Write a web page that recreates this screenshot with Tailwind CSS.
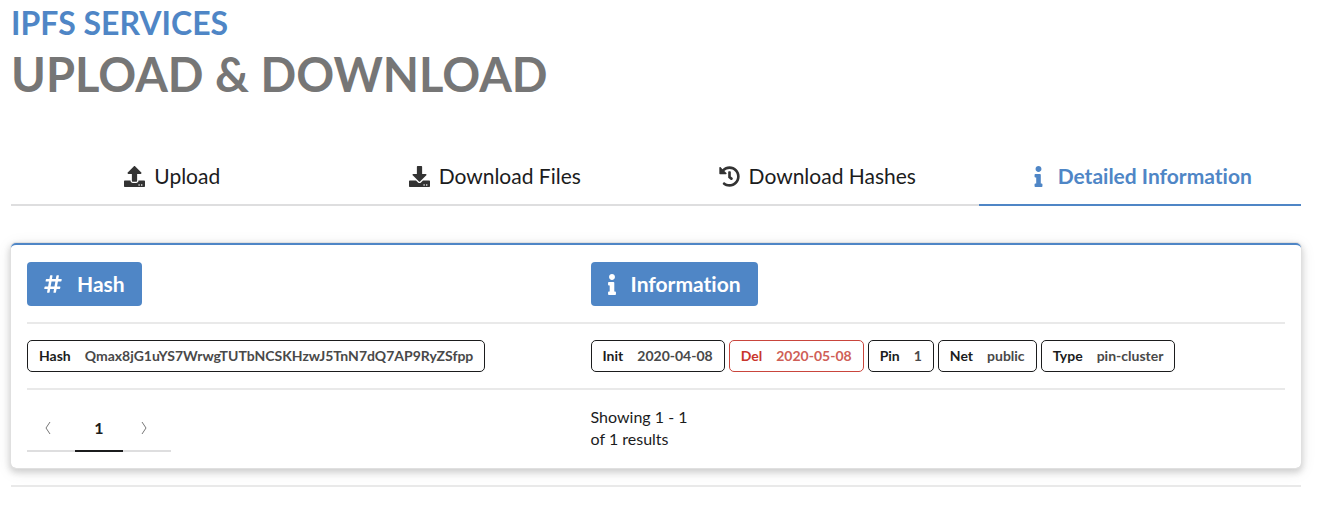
<!DOCTYPE html>
<html lang="en">
<head>
<meta charset="utf-8">
<meta name="viewport" content="width=device-width, initial-scale=1">
<title>IPFS Services</title>
<script src="https://cdn.jsdelivr.net/npm/@tailwindcss/browser@4"></script>
</head>
<body class="bg-white font-[Lato,sans-serif] text-[#1b1c1d] [font-variant-ligatures:none]">
<svg class="hidden" aria-hidden="true">
  <symbol id="upload" viewBox="0 0 512 512"><path d="M296 384h-80c-13.3 0-24-10.7-24-24V192h-87.7c-17.8 0-26.7-21.5-14.1-34.1L242.3 5.7c7.5-7.5 19.8-7.5 27.3 0l152.2 152.2c12.6 12.6 3.7 34.1-14.1 34.1H320v168c0 13.3-10.7 24-24 24zm216-8v112c0 13.3-10.7 24-24 24H24c-13.3 0-24-10.7-24-24V376c0-13.3 10.7-24 24-24h136v8c0 30.9 25.1 56 56 56h80c30.9 0 56-25.1 56-56v-8h136c13.3 0 24 10.7 24 24zm-124 88c0-11-9-20-20-20s-20 9-20 20 9 20 20 20 20-9 20-20zm64 0c0-11-9-20-20-20s-20 9-20 20 9 20 20 20 20-9 20-20z"/></symbol>
  <symbol id="download" viewBox="0 0 512 512"><path d="M216 0h80c13.3 0 24 10.7 24 24v168h87.7c17.8 0 26.7 21.5 14.1 34.1L269.7 378.3c-7.5 7.5-19.8 7.5-27.3 0L90.1 226.1c-12.6-12.6-3.7-34.1 14.1-34.1H192V24c0-13.3 10.7-24 24-24zm296 376v112c0 13.3-10.7 24-24 24H24c-13.3 0-24-10.7-24-24V376c0-13.3 10.7-24 24-24h146.7l49 49c20.1 20.1 52.5 20.1 72.6 0l49-49H488c13.3 0 24 10.7 24 24zm-124 88c0-11-9-20-20-20s-20 9-20 20 9 20 20 20 20-9 20-20zm64 0c0-11-9-20-20-20s-20 9-20 20 9 20 20 20 20-9 20-20z"/></symbol>
  <symbol id="history" viewBox="0 0 512 512"><path d="M504 255.531c.253 136.64-111.18 248.372-247.82 248.468-59.015.042-113.223-20.53-155.822-54.911-11.077-8.94-11.905-25.541-1.839-35.607l11.267-11.267c8.609-8.609 22.353-9.551 31.891-1.984C173.062 425.135 212.781 440 256 440c101.705 0 184-82.311 184-184 0-101.705-82.311-184-184-184-48.814 0-93.149 18.969-126.068 49.932l50.754 50.754c10.08 10.08 2.941 27.314-11.313 27.314H24c-8.837 0-16-7.163-16-16V38.627c0-14.254 17.234-21.393 27.314-11.314l49.372 49.372C129.209 34.136 189.552 8 256 8c136.81 0 247.747 110.78 248 247.531zm-180.912 78.784l9.823-12.63c8.138-10.463 6.253-25.542-4.21-33.679L288 256.349V152c0-13.255-10.745-24-24-24h-16c-13.255 0-24 10.745-24 24v135.651l65.409 50.874c10.463 8.137 25.541 6.253 33.679-4.21z"/></symbol>
  <symbol id="info" viewBox="0 0 192 512"><path d="M20 424.229h20V279.771H20c-11.046 0-20-8.954-20-20V212c0-11.046 8.954-20 20-20h112c11.046 0 20 8.954 20 20v212.229h20c11.046 0 20 8.954 20 20V492c0 11.046-8.954 20-20 20H20c-11.046 0-20-8.954-20-20v-47.771c0-11.046 8.954-20 20-20zM96 0C56.235 0 24 32.235 24 72s32.235 72 72 72 72-32.235 72-72S135.764 0 96 0z"/></symbol>
  <symbol id="hashtag" viewBox="0 0 448 512"><path d="M440.667 182.109l7.143-40c1.313-7.355-4.342-14.109-11.813-14.109h-74.81l14.623-81.891C377.123 38.754 371.468 32 363.997 32h-40.632a12 12 0 0 0-11.813 9.891L296.175 128H197.54l14.623-81.891C213.477 38.754 207.822 32 200.35 32h-40.632a12 12 0 0 0-11.813 9.891L132.528 128H53.432a12 12 0 0 0-11.813 9.891l-7.143 40C33.163 185.246 38.818 192 46.289 192h74.81L98.242 320H19.146a12 12 0 0 0-11.813 9.891l-7.143 40C-1.123 377.246 4.532 384 12.003 384h74.81L72.19 465.891C70.877 473.246 76.532 480 84.003 480h40.632a12 12 0 0 0 11.813-9.891L151.826 384h98.634l-14.623 81.891C234.523 473.246 240.178 480 247.65 480h40.632a12 12 0 0 0 11.813-9.891L315.472 384h79.096a12 12 0 0 0 11.813-9.891l7.143-40c1.313-7.355-4.342-14.109-11.813-14.109h-74.81l22.857-128h79.096a12 12 0 0 0 11.813-9.891zM261.889 320h-98.634l22.857-128h98.634l-22.857 128z"/></symbol>
</svg>

<main class="pl-[11px] pr-[27px]">
  <header class="pt-1 font-bold">
    <p class="text-[32px] leading-[38px] text-[#4f86c6]">IPFS SERVICES</p>
    <h1 class="text-[47px] leading-[64px] text-[#767676]">UPLOAD &amp; DOWNLOAD</h1>
  </header>

  <nav class="mt-[42px] grid grid-cols-4 text-[21px] leading-[26px]">
    <button type="button" class="flex items-center justify-center gap-[9px] border-b-2 border-[#dededf] py-[15px]">
      <svg class="size-[21px] fill-[#333]"><use href="#upload"/></svg>Upload
    </button>
    <button type="button" class="flex items-center justify-center gap-[9px] border-b-2 border-[#dededf] py-[15px]">
      <svg class="size-[21px] fill-[#333]"><use href="#download"/></svg>Download Files
    </button>
    <button type="button" class="flex items-center justify-center gap-[9px] border-b-2 border-[#dededf] py-[15px]">
      <svg class="size-[21px] fill-[#333]"><use href="#history"/></svg>Download Hashes
    </button>
    <button type="button" class="flex items-center justify-center gap-[9px] border-b-2 border-[#4f86c6] py-[15px] font-bold text-[#4f86c6]">
      <svg class="size-[21px] fill-current"><use href="#info"/></svg>Detailed Information
    </button>
  </nav>

  <section class="mt-[37px] rounded-[5px] border-t-2 border-[#4f86c6] px-4 shadow-[0_0_0_1px_#e0e0e0,0_3px_6px_1px_#cfcfcf,0_3px_16px_0_#e6e6e6]">
    <table class="w-full table-fixed text-left">
      <colgroup><col class="w-[44.8%]"><col></colgroup>
      <thead>
        <tr class="border-b-2 border-[#e9e9e9]">
          <th class="pt-[17px] pb-4 font-bold">
            <span class="inline-flex h-11 items-center gap-[15px] rounded-[4px] bg-[#4f86c6] px-[17px] align-top text-[21px] text-white">
              <svg class="h-[20px] w-[18px] fill-current"><use href="#hashtag"/></svg>Hash
            </span>
          </th>
          <th class="pt-[17px] pb-4 font-bold">
            <span class="inline-flex h-11 items-center gap-[15px] rounded-[4px] bg-[#4f86c6] px-[17px] align-top text-[21px] text-white">
              <svg class="h-[21px] w-[8px] fill-current"><use href="#info"/></svg>Information
            </span>
          </th>
        </tr>
      </thead>
      <tbody>
        <tr class="border-b-2 border-[#e9e9e9] text-[14px] font-bold">
          <td class="py-4">
            <span class="inline-flex h-8 items-center gap-[14px] rounded-[5px] border border-[#1b1c1d] px-[11px] pb-[2px] align-top">Hash<span class="text-[#494949]">Qmax8jG1uYS7WrwgTUTbNCSKHzwJ5TnN7dQ7AP9RyZSfpp</span></span>
          </td>
          <td class="py-4">
            <div class="flex flex-wrap gap-1">
              <span class="inline-flex h-8 items-center gap-[14px] rounded-[5px] border border-[#1b1c1d] px-[11px] pb-[2px]">Init<span class="text-[#494949]">2020-04-08</span></span>
              <span class="inline-flex h-8 items-center gap-[14px] rounded-[5px] border border-[#c9453c] px-[11px] pb-[2px] text-[#c9362c]">Del<span class="text-[#cf5f57]">2020-05-08</span></span>
              <span class="inline-flex h-8 items-center gap-[14px] rounded-[5px] border border-[#1b1c1d] px-[11px] pb-[2px]">Pin<span class="text-[#494949]">1</span></span>
              <span class="inline-flex h-8 items-center gap-[14px] rounded-[5px] border border-[#1b1c1d] px-[11px] pb-[2px]">Net<span class="text-[#494949]">public</span></span>
              <span class="inline-flex h-8 items-center gap-[14px] rounded-[5px] border border-[#1b1c1d] px-[11px] pb-[2px]">Type<span class="text-[#494949]">pin-cluster</span></span>
            </div>
          </td>
        </tr>
      </tbody>
      <tfoot>
        <tr class="text-[16px] leading-[22px]">
          <td class="py-4 align-top">
            <div class="flex">
              <button type="button" aria-label="Previous page" class="flex h-[46px] w-12 items-center justify-center border-b-2 border-[#dededf] pr-[6px]"><svg class="h-[14px] w-[8px] fill-none stroke-[#777]" viewBox="0 0 8 14"><path d="M6 1L2 7l4 6"/></svg></button>
              <button type="button" aria-current="page" class="h-[46px] w-12 border-b-2 border-[#1b1c1d] font-bold">1</button>
              <button type="button" aria-label="Next page" class="flex h-[46px] w-12 items-center justify-center border-b-2 border-[#dededf] pr-[6px]"><svg class="h-[14px] w-[8px] fill-none stroke-[#777]" viewBox="0 0 8 14"><path d="M2 1l4 6-4 6"/></svg></button>
            </div>
          </td>
          <td class="py-4 align-top">Showing 1 - 1<br>of 1 results</td>
        </tr>
      </tfoot>
    </table>
  </section>
  <hr class="mt-[17px] border-t-2 border-[#e9e9e9]">
</main>
</body>
</html>
